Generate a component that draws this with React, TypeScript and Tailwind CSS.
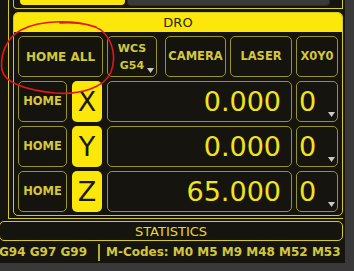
import { ReactNode } from 'react';

const font = "font-['DejaVu_Sans',sans-serif]";

function Caret() {
  return (
    <svg width="7" height="5" viewBox="0 0 7 5" className="absolute">
      <path d="M0 0 L7 0 L3.5 5 Z" fill="#c9c9c9" />
    </svg>
  );
}

function Btn({ w, children, className = '' }: { w: string; children: ReactNode; className?: string }) {
  return (
    <div
      className={`${w} h-full shrink-0 rounded-[5px] border border-[#9a932a] bg-[#15130e] flex items-center justify-center text-[#d3c83a] font-bold leading-none ${className}`}
    >
      {children}
    </div>
  );
}

function AxisRow({ axis, value }: { axis: string; value: string }) {
  return (
    <div className="flex h-[41px]">
      <Btn w="w-[49px]" className="text-[11.5px]">HOME</Btn>
      <div className="ml-[5px] w-[30px] h-full rounded-[5px] bg-[#fbe70a] flex items-center justify-center text-[27px] text-[#1a1800] leading-none">
        {axis}
      </div>
      <div className="ml-[5px] w-[185px] h-full rounded-[5px] border border-[#9a932a] flex items-center justify-end pr-[10px] text-[27px] text-[#f2e41a] leading-none">
        {value}
      </div>
      <div className="relative ml-[4px] w-[42px] h-full rounded-[5px] border border-[#9a932a] flex items-center pl-[2px] text-[27px] text-[#f2e41a] leading-none">
        0
        <div className="absolute left-[31px] top-[30px]">
          <Caret />
        </div>
      </div>
    </div>
  );
}

export default function App() {
  return (
    <div className={`relative w-[354px] h-[271px] bg-[#393939] overflow-hidden ${font}`}>
      <div className="w-[345px] h-[263px] bg-[#16140f] flex flex-col">
        {/* outer frame */}
        <div className="ml-[8px] w-[335px] h-[219px] border-l border-b border-[#d6cb1c] pl-[4px] pb-[2px] flex flex-col">
          {/* remnant of the panel above */}
          <div className="h-[9px] w-[330px] border-l border-r border-b border-[#d6cb1c] rounded-bl-[4px] flex">
            <div className="ml-[6px] w-[105px] h-[5px] rounded-b-[4px] bg-[#fbe70a]" />
            <div className="ml-[2px] w-[203px] h-[6px] rounded-b-[4px] bg-[#3a3a38] border border-t-0 border-[#2a2a28]" />
          </div>
          {/* DRO panel */}
          <div className="mt-[3px] w-[330px] border border-[#d6cb1c] rounded-[5px] flex flex-col">
            <div className="h-[19px] bg-[#fbe70a] rounded-t-[4px] flex items-center justify-center text-[13px] text-[#2a2600] leading-none">
              DRO
            </div>
            <div className="pt-[4px] pb-[3px] pl-[4px] pr-[4px] flex flex-col gap-[4px]">
              <div className="flex h-[41px]">
                <Btn w="w-[85px]" className="text-[12px]">HOME ALL</Btn>
                <div className="relative ml-[4px] w-[50px] h-full rounded-[5px] border border-[#9a932a] flex flex-col items-center justify-center text-[#d3c83a] font-bold text-[11px] leading-[17px]">
                  <span>WCS</span>
                  <span>G54</span>
                  <div className="absolute left-[39px] top-[31px]">
                    <Caret />
                  </div>
                </div>
                <Btn w="w-[61px] ml-[8px]" className="text-[11.5px]">CAMERA</Btn>
                <Btn w="w-[62px] ml-[4px]" className="text-[11.5px]">LASER</Btn>
                <Btn w="w-[42px] ml-[4px]" className="text-[11.5px]">X0Y0</Btn>
              </div>
              <AxisRow axis="X" value="0.000" />
              <AxisRow axis="Y" value="0.000" />
              <AxisRow axis="Z" value="65.000" />
            </div>
          </div>
        </div>

        {/* statistics */}
        <div className="mt-[2px] -ml-px w-[344px] h-[20px] border border-[#d6cb1c] rounded-[5px] flex items-center justify-center text-[13px] text-[#e8dc22] leading-none">
          STATISTICS
        </div>
        <div className="flex-1 flex items-center -ml-[1px] whitespace-nowrap text-[12px] font-bold text-[#d3c83a] leading-none">
          <span>G94 G97 G99</span>
          <div className="ml-[11px] mr-[6px] w-[2px] h-[17px] bg-[#b8ad28]" />
          <span>M-Codes: M0 M5 M9 M48 M52 M53</span>
        </div>
      </div>

      {/* hand-drawn annotation */}
      <svg className="absolute left-0 top-0 pointer-events-none" width="354" height="271" viewBox="0 0 354 271">
        <path
          d="M96 27 C 76 20, 42 19, 21 30 C 6 38, 0 55, 2 70 C 5 83, 26 90, 55 93 C 80 95, 104 88, 111 72 C 117 56, 112 39, 101 30 C 91 24, 76 22, 60 23"
          fill="none"
          stroke="#e01818"
          strokeWidth="1.6"
          strokeLinecap="round"
        />
      </svg>
    </div>
  );
}
